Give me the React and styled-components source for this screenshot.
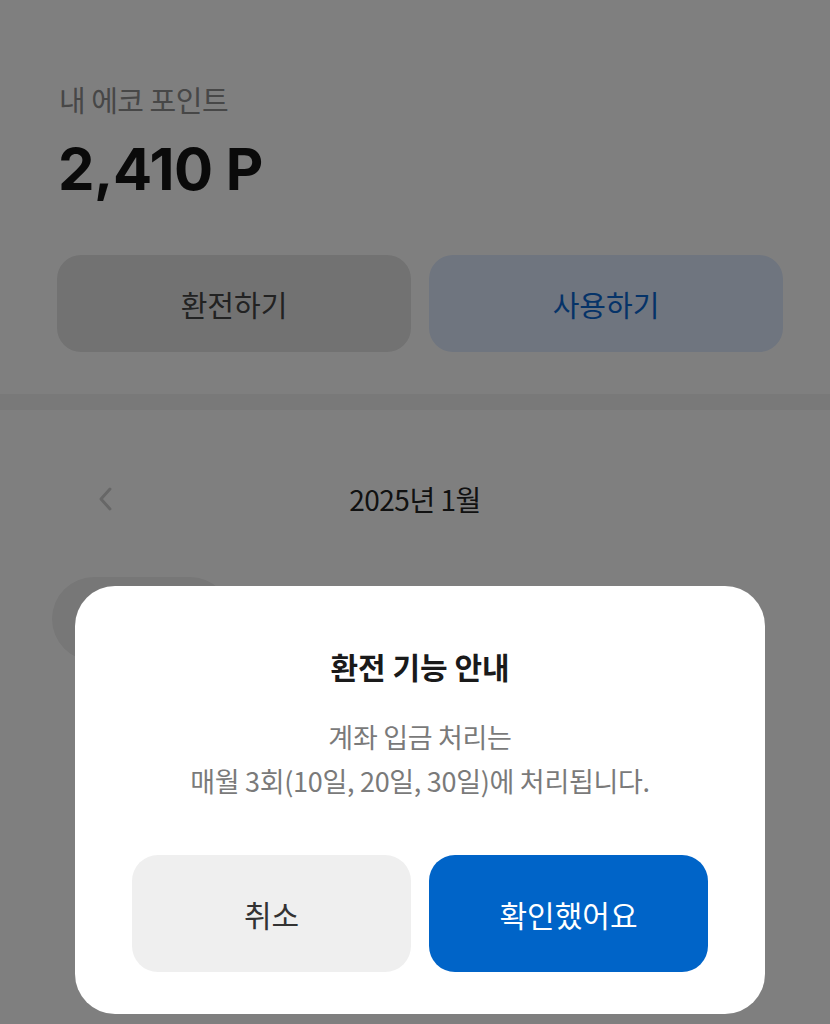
import React from "react";
import styled, { createGlobalStyle } from "styled-components";

const GlobalStyle = createGlobalStyle`
  html, body {
    margin: 0;
    padding: 0;
    background: #ffffff;
  }
  body {
    font-family: "Noto Sans CJK KR", "Noto Sans", sans-serif;
    overflow: hidden;
  }
  * {
    box-sizing: border-box;
  }
`;

const Page = styled.div`
  position: relative;
  width: 830px;
  height: 1024px;
  background: #ffffff;
  overflow: hidden;
`;

const PointSection = styled.section`
  padding: 78px 47px 42px 57px;
  border-bottom: 16px solid #f3f3f3;
`;

const Label = styled.p`
  margin: 0 0 0 2px;
  font-size: 29px;
  line-height: 42px;
  color: #8e8e8e;
  letter-spacing: -0.5px;
`;

const Amount = styled.h1`
  margin: 14px 0 0 1px;
  font-family: "Inter", "Noto Sans CJK KR", sans-serif;
  font-size: 58px;
  line-height: 70px;
  font-weight: 700;
  color: #141414;
  letter-spacing: -0.5px;
`;

const ActionRow = styled.div`
  display: grid;
  grid-template-columns: 1fr 1fr;
  gap: 18px;
  margin-top: 51px;
`;

const ActionButton = styled.button`
  height: 97px;
  border: none;
  border-radius: 24px;
  font-family: inherit;
  font-size: 29px;
  background: ${({ $primary }) => ($primary ? "#deeaff" : "#e4e4e4")};
  color: ${({ $primary }) => ($primary ? "#0a66d0" : "#444444")};
`;

const MonthNav = styled.div`
  position: relative;
  display: flex;
  align-items: center;
  justify-content: center;
  height: 60px;
  margin-top: 59px;
  padding: 0 90px;
`;

const PrevButton = styled.span`
  position: absolute;
  left: 97px;
  top: 17px;
  display: flex;
`;

const MonthTitle = styled.span`
  font-size: 28px;
  color: #222222;
  letter-spacing: -0.5px;
`;

const Chips = styled.div`
  display: flex;
  gap: 12px;
  padding: 0 0 0 52px;
  margin-top: 48px;
`;

const Chip = styled.span`
  width: 180px;
  height: 84px;
  border-radius: 42px;
  background: #eeeeee;
`;

const Overlay = styled.div`
  position: absolute;
  inset: 0;
  background: rgba(0, 0, 0, 0.5);
  display: flex;
  align-items: flex-end;
  justify-content: flex-start;
  padding: 0 0 10px 75px;
`;

const Modal = styled.div`
  width: 690px;
  height: 428px;
  background: #ffffff;
  border-radius: 40px;
  padding: 58px 57px 42px;
  display: flex;
  flex-direction: column;
  align-items: center;
`;

const ModalTitle = styled.h2`
  margin: 0;
  font-size: 30px;
  line-height: 44px;
  font-weight: 700;
  color: #1a1a1a;
`;

const ModalBody = styled.p`
  margin: 27px 0 0;
  font-size: 27px;
  line-height: 44px;
  color: #7a7a7a;
  text-align: center;
  letter-spacing: -0.3px;
`;

const ModalActions = styled.div`
  display: grid;
  grid-template-columns: 1fr 1fr;
  gap: 18px;
  width: 100%;
  margin-top: auto;
`;

const ModalButton = styled.button`
  height: 117px;
  border: none;
  border-radius: 26px;
  font-family: inherit;
  font-size: 30px;
  background: ${({ $primary }) => ($primary ? "#0064c8" : "#efefef")};
  color: ${({ $primary }) => ($primary ? "#ffffff" : "#333333")};
`;

export default function App() {
  return (
    <>
      <GlobalStyle />
      <Page>
        <PointSection>
          <Label>내 에코 포인트</Label>
          <Amount>2,410 P</Amount>
          <ActionRow>
            <ActionButton>환전하기</ActionButton>
            <ActionButton $primary>사용하기</ActionButton>
          </ActionRow>
        </PointSection>
        <MonthNav>
          <PrevButton>
            <svg width="16" height="26" viewBox="0 0 16 26" fill="none">
              <path
                d="M13 3L4 13L13 23"
                stroke="#cfcfcf"
                strokeWidth="3"
                strokeLinecap="round"
                strokeLinejoin="round"
              />
            </svg>
          </PrevButton>
          <MonthTitle>2025년 1월</MonthTitle>
        </MonthNav>
        <Chips>
          <Chip />
        </Chips>
        <Overlay>
          <Modal>
            <ModalTitle>환전 기능 안내</ModalTitle>
            <ModalBody>
              계좌 입금 처리는
              <br />
              매월 3회(10일, 20일, 30일)에 처리됩니다.
            </ModalBody>
            <ModalActions>
              <ModalButton>취소</ModalButton>
              <ModalButton $primary>확인했어요</ModalButton>
            </ModalActions>
          </Modal>
        </Overlay>
      </Page>
    </>
  );
}
